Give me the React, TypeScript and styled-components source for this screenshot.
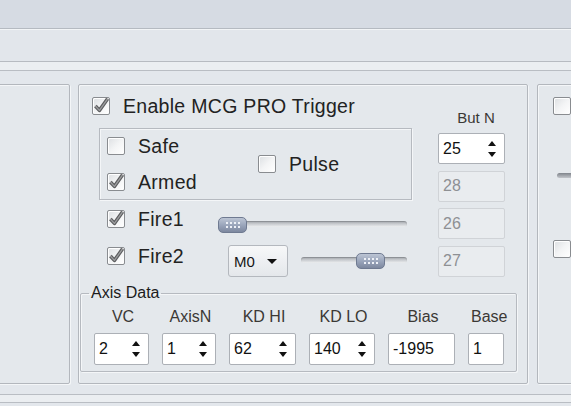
import React from "react";
import styled, { createGlobalStyle } from "styled-components";

const GlobalStyle = createGlobalStyle`
  html, body {
    margin: 0;
    padding: 0;
  }
  body {
    width: 571px;
    height: 406px;
    overflow: hidden;
    background: #e3e7ec;
    font-family: "Liberation Sans", Arial, sans-serif;
  }
`;

const Window = styled.div`
  width: 571px;
  height: 406px;
  display: flex;
  flex-direction: column;
  overflow: hidden;
  background: #e3e7ec;
`;

const TitleBand = styled.div`
  flex: none;
  height: 28px;
  background: #d6dbe3;
  border-bottom: 1px solid #b5bac1;
`;

const Toolbar = styled.div`
  flex: none;
  height: 32px;
  background: #e2e6eb;
  box-shadow: inset 0 1px 0 #f2f4f6;
  border-bottom: 1px solid #b7bbc1;
`;

const Strip = styled.div<{ $top?: boolean }>`
  flex: none;
  height: 7px;
  background: #ebeef1;
  border-bottom: 1px solid #b9bdc3;
  ${(p) => (p.$top ? "height: 8px;" : "border-top: 1px solid #b9bdc3;")}
`;

const Content = styled.div`
  flex: none;
  height: 323px;
  box-sizing: border-box;
  padding: 13px 0 10px;
  display: flex;
  gap: 8px;
`;

const Panel = styled.div`
  flex: none;
  box-sizing: border-box;
  border: 1px solid #b3b7bd;
  border-radius: 2px;
  background: #e4e8ec;
  box-shadow: inset 1px 1px 0 #f4f6f8, 1px 1px 0 #f4f6f8;
`;

const LeftPanel = styled(Panel)`
  width: 81px;
  margin-left: -11px;
`;

const MidPanel = styled(Panel)`
  width: 450px;
  padding: 12px 0 0 13px;
  display: grid;
  grid-template-columns: 328px 67px;
  grid-template-rows: auto auto;
  column-gap: 18px;
  row-gap: 8px;
  align-content: start;
`;

const RightPanel = styled(Panel)`
  width: 70px;
  margin-left: 1px;
  padding: 12px 0 0 15px;
  display: flex;
  flex-direction: column;
  align-items: flex-start;
`;

const Column = styled.div`
  display: flex;
  flex-direction: column;
  align-items: flex-start;
`;

/* ---------- checkbox ---------- */

const CheckWrap = styled.label<{ $top?: number }>`
  display: flex;
  align-items: center;
  gap: 13px;
  height: 18px;
  margin-top: ${(p) => p.$top ?? 0}px;
  font-size: 19.5px;
  letter-spacing: 0.3px;
  color: #222222;
  white-space: nowrap;
`;

const Box = styled.span`
  flex: none;
  display: block;
  width: 18px;
  height: 18px;
  box-sizing: border-box;
  border: 1px solid #898c90;
  border-radius: 2px;
  background: linear-gradient(135deg, #dcdfe2 0%, #f3f4f5 50%, #ffffff 100%);
  box-shadow: inset 1px 1px 0 #ffffff;

  svg {
    display: block;
    overflow: visible;
  }
`;

const Check: React.FC<{ checked?: boolean; label?: string; top?: number }> = ({
  checked,
  label,
  top,
}) => (
  <CheckWrap $top={top}>
    <Box>
      {checked && (
        <svg width="16" height="16" viewBox="0 0 16 16">
          <path
            d="M2.4 8 L6.4 12.4 L14.6 0.8"
            fill="none"
            stroke="#5c5d5f"
            strokeWidth="3.6"
            strokeLinejoin="round"
          />
          <path
            d="M2.4 8 L6.4 12.4 L14.6 0.8"
            fill="none"
            stroke="#9c9d9f"
            strokeWidth="1.3"
            strokeLinejoin="round"
          />
        </svg>
      )}
    </Box>
    {label && <span>{label}</span>}
  </CheckWrap>
);

/* ---------- group with safe / armed / pulse ---------- */

const ModeGroup = styled.div`
  box-sizing: border-box;
  width: 313px;
  height: 72px;
  margin: 13px 0 0 7px;
  padding: 8px 0 0 7px;
  border: 1px solid #b6bac0;
  box-shadow: inset 1px 1px 0 #f4f6f8, 1px 1px 0 #f4f6f8;
  display: grid;
  grid-template-columns: 151px auto;
  grid-template-rows: 18px 18px;
  row-gap: 18px;
`;

const PulseCell = styled.div`
  grid-column: 2;
  grid-row: 1 / span 2;
  align-self: center;
`;

/* ---------- fire rows ---------- */

const FireRow = styled.div<{ $top: number }>`
  display: flex;
  align-items: flex-start;
  margin: ${(p) => p.$top}px 0 0 15px;
`;

const LabelCell = styled.div<{ $w: number; $top?: number }>`
  flex: none;
  width: ${(p) => p.$w}px;
  padding-top: ${(p) => p.$top ?? 0}px;
`;

const Slider = styled.div<{ $w: number; $top: number; $gap?: number }>`
  position: relative;
  flex: none;
  width: ${(p) => p.$w}px;
  height: 16px;
  margin-top: ${(p) => p.$top}px;
  margin-left: ${(p) => p.$gap ?? 0}px;
`;

const Track = styled.div`
  margin-top: 4px;
  height: 6px;
  border-radius: 3px;
  background: linear-gradient(to bottom, #a3a7ad 0%, #c9ccd0 50%, #eceef0 100%);
  box-shadow: inset 0 1px 1px rgba(0, 0, 0, 0.18);
`;

const Thumb = styled.div`
  position: absolute;
  top: 0;
  box-sizing: border-box;
  width: 29px;
  height: 16px;
  border: 1px solid #6f7a91;
  border-radius: 5px;
  background: linear-gradient(to bottom, #bcc5d4 0%, #98a3b9 55%, #7d889f 100%);
  display: flex;
  align-items: center;
  justify-content: center;
`;

const Dots = styled.span`
  width: 16px;
  height: 8px;
  background: radial-gradient(circle, #eef1f7 0 0.8px, transparent 1.3px) 0 0 / 4px 4px;
`;

const Dropdown = styled.div`
  flex: none;
  box-sizing: border-box;
  width: 60px;
  height: 32px;
  padding: 0 10px 0 5px;
  display: flex;
  align-items: center;
  justify-content: space-between;
  border: 1px solid #b4b8be;
  border-radius: 3px;
  background: linear-gradient(to bottom, #f7f8f9, #e4e7eb);
  font-size: 15px;
  color: #151515;
`;

const Tri = styled.span<{ $down?: boolean; $w?: number }>`
  display: block;
  width: 0;
  height: 0;
  border-left: ${(p) => (p.$w ?? 8) / 2}px solid transparent;
  border-right: ${(p) => (p.$w ?? 8) / 2}px solid transparent;
  ${(p) => (p.$down ? "border-top: 5px solid #111;" : "border-bottom: 5px solid #111;")}
`;

/* ---------- fields ---------- */

const Field = styled.div<{ $w?: number; $h?: number; $off?: boolean }>`
  flex: none;
  box-sizing: border-box;
  width: ${(p) => (p.$w ? `${p.$w}px` : "100%")};
  height: ${(p) => p.$h ?? 32}px;
  padding: 0 8px 0 4px;
  display: flex;
  align-items: center;
  justify-content: space-between;
  background: ${(p) => (p.$off ? "#e9ecef" : "#ffffff")};
  border: 1px solid ${(p) => (p.$off ? "#d0d3d7" : "#acb0b6")};
  border-radius: 2px;
  font-size: 16px;
  color: ${(p) => (p.$off ? "#8e9094" : "#111111")};
`;

const Arrows = styled.span`
  display: flex;
  flex-direction: column;
  gap: 6px;
`;

const Spin: React.FC<{ value: string; w?: number; h?: number }> = ({ value, w, h }) => (
  <Field $w={w} $h={h}>
    <span>{value}</span>
    <Arrows>
      <Tri />
      <Tri $down />
    </Arrows>
  </Field>
);

const ButCol = styled.div`
  display: flex;
  flex-direction: column;
  gap: 6.5px;
`;

const SmallLabel = styled.div<{ $shift?: number }>`
  font-size: 15px;
  line-height: 17px;
  color: #3b3835;
  text-align: center;
  padding-left: ${(p) => p.$shift ?? 0}px;
`;

const ButHead = styled(SmallLabel)`
  margin: 12px 0 0.5px;
`;

/* ---------- axis data ---------- */

const AxisSet = styled.fieldset`
  grid-column: 1 / -1;
  box-sizing: border-box;
  width: 437px;
  margin: 0 0 0 -12px;
  padding: 0;
  min-width: 0;
  border: 1px solid #b6bac0;
  border-radius: 2px;
  box-shadow: inset 1px 1px 0 #f4f6f8, 1px 1px 0 #f4f6f8;
`;

const Legend = styled.legend`
  margin-left: 8px;
  padding: 0 2px;
  font-size: 16px;
  line-height: 16px;
  color: #1c1c1c;
`;

const AxisGrid = styled.div`
  display: grid;
  grid-template-columns: 55px 54px 67px 66px 67px 36px;
  column-gap: 13px;
  row-gap: 7px;
  padding: 7px 0 6px 13px;
`;

const AxisLabel = styled.div`
  font-size: 16px;
  line-height: 18px;
  color: #3b3835;
  text-align: center;
  padding-left: 3px;
`;

const SideTrack = styled.div`
  width: 60px;
  height: 5px;
  margin: 58px 0 0 4px;
  border-radius: 3px;
  background: linear-gradient(to bottom, #7f848b, #c2c5ca);
`;

const axis = [
  { label: "VC", value: "2", spin: true },
  { label: "AxisN", value: "1", spin: true },
  { label: "KD HI", value: "62", spin: true },
  { label: "KD LO", value: "140", spin: true },
  { label: "Bias", value: "-1995", spin: false },
  { label: "Base", value: "1", spin: false },
];

export default function App() {
  return (
    <>
      <GlobalStyle />
      <Window>
        <TitleBand />
        <Toolbar />
        <Strip $top />
        <Content>
          <LeftPanel />
          <MidPanel>
            <Column>
              <Check checked label="Enable MCG PRO Trigger" />
              <ModeGroup>
                <Check label="Safe" />
                <PulseCell>
                  <Check label="Pulse" />
                </PulseCell>
                <Check checked label="Armed" />
              </ModeGroup>
              <FireRow $top={10}>
                <LabelCell $w={111}>
                  <Check checked label="Fire1" />
                </LabelCell>
                <Slider $w={189} $top={7}>
                  <Track />
                  <Thumb style={{ left: 0 }}>
                    <Dots />
                  </Thumb>
                </Slider>
              </FireRow>
              <FireRow $top={12}>
                <LabelCell $w={121} $top={2}>
                  <Check checked label="Fire2" />
                </LabelCell>
                <Dropdown>
                  <span>M0</span>
                  <Tri $down $w={10} />
                </Dropdown>
                <Slider $w={106} $top={8} $gap={13}>
                  <Track />
                  <Thumb style={{ left: 55 }}>
                    <Dots />
                  </Thumb>
                </Slider>
              </FireRow>
            </Column>
            <ButCol>
              <ButHead $shift={9}>But N</ButHead>
              <Spin value="25" h={31} />
              <Field $h={31} $off>28</Field>
              <Field $h={31} $off>26</Field>
              <Field $h={31} $off>27</Field>
            </ButCol>
            <AxisSet>
              <Legend>Axis Data</Legend>
              <AxisGrid>
                {axis.map((a) => (
                  <AxisLabel key={a.label}>{a.label}</AxisLabel>
                ))}
                {axis.map((a) =>
                  a.spin ? (
                    <Spin key={a.label} value={a.value} />
                  ) : (
                    <Field key={a.label}>{a.value}</Field>
                  )
                )}
              </AxisGrid>
            </AxisSet>
          </MidPanel>
          <RightPanel>
            <Check />
            <SideTrack />
            <Check top={62} />
          </RightPanel>
        </Content>
        <Strip />
      </Window>
    </>
  );
}
